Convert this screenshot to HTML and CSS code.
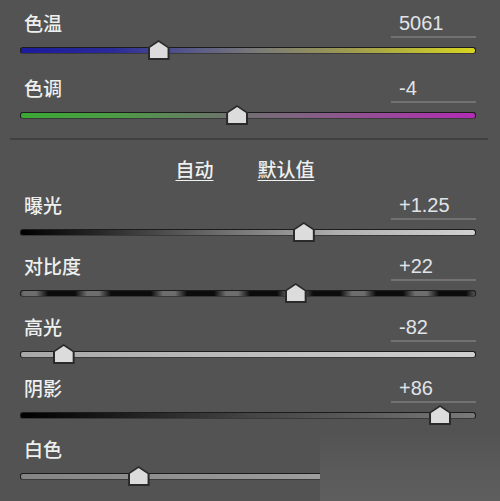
FILE: index.html
```html
<!DOCTYPE html>
<html lang="zh">
	<head>
		<meta charset="utf-8">
		<meta name="viewport" content="width=device-width, initial-scale=1.0">
		<title>基本调整</title>
		<link rel="stylesheet" href="styles.css">
	</head>
	<body>
		<div class="panel">
			<div class="row">
				<div class="head"><span class="label">色温</span><span class="value">5061</span></div>
				<div class="track temp"><span class="thumb" style="left: 30.3%"></span></div>
			</div>
			<div class="row">
				<div class="head"><span class="label">色调</span><span class="value">-4</span></div>
				<div class="track tint"><span class="thumb" style="left: 47.6%"></span></div>
			</div>

			<div class="sep"></div>

			<div class="links">
				<a href="#">自动</a>
				<a href="#">默认值</a>
			</div>

			<div class="row tight">
				<div class="head"><span class="label">曝光</span><span class="value">+1.25</span></div>
				<div class="track exposure"><span class="thumb" style="left: 62.3%"></span></div>
			</div>
			<div class="row tight">
				<div class="head"><span class="label">对比度</span><span class="value">+22</span></div>
				<div class="track contrast"><span class="thumb" style="left: 60.5%"></span></div>
			</div>
			<div class="row tight">
				<div class="head"><span class="label">高光</span><span class="value">-82</span></div>
				<div class="track highlights"><span class="thumb" style="left: 9.4%"></span></div>
			</div>
			<div class="row tight">
				<div class="head"><span class="label">阴影</span><span class="value">+86</span></div>
				<div class="track shadows"><span class="thumb" style="left: 92.3%"></span></div>
			</div>
			<div class="row tight">
				<div class="head"><span class="label">白色</span></div>
				<div class="track whites"><span class="thumb" style="left: 25.9%"></span></div>
			</div>
			<div class="row tight">
				<div class="head"><span class="label">黑色</span></div>
			</div>

			<div class="mark"></div>
		</div>
	</body>
</html>
```

FILE: styles.css
```css
	html, body {
		margin: 0;
		height: 100%;
		overflow: hidden;
		background: #535353;
	}

	body {
		font-family: "Liberation Sans", "Noto Sans CJK SC", sans-serif;
		color: #e4e6e8;
	}

	.panel {
		position: relative;
		padding: 8px 24px 0 20px;
		height: 100%;
		box-sizing: border-box;
	}

	.row {
		margin-bottom: 19px;
	}

	.row.tight {
		margin-bottom: 15px;
	}

	.head {
		display: flex;
		justify-content: space-between;
		align-items: center;
		height: 30px;
		padding-left: 4px;
	}

	.label {
		font-family: "Noto Sans CJK SC", sans-serif;
		font-size: 19px;
		font-weight: 500;
		line-height: 30px;
		color: #eef0f0;
	}

	.value {
		width: 85px;
		height: 30px;
		box-sizing: border-box;
		padding-left: 8px;
		font-size: 20px;
		line-height: 30px;
		border-bottom: 2px solid #727272;
		color: #e0e4e8;
	}

	.track {
		position: relative;
		margin-top: 9px;
		height: 7px;
		box-sizing: border-box;
		border: 1px solid #1c1c1c;
		border-bottom-color: #3a3a3a;
		border-radius: 3px;
	}

	.thumb {
		position: absolute;
		top: -8px;
		width: 22px;
		height: 20px;
		margin-left: -11px;
		background: #2a2a2a;
		clip-path: polygon(50% 0, 100% 38%, 100% 100%, 0 100%, 0 38%);
	}

	.thumb::after {
		content: "";
		position: absolute;
		left: 2px;
		top: 2px;
		right: 2px;
		bottom: 2px;
		background: #dcdcdc;
		clip-path: polygon(50% 0, 100% 38%, 100% 100%, 0 100%, 0 38%);
	}

	.temp {
		background: linear-gradient(to right, #1b1b9c, #2a2a98 20%, #5a5a88 38%, #7a7a78 52%, #9c9a50 72%, #d8d620);
	}

	.tint {
		background: linear-gradient(to right, #3aa834, #4c9c44 20%, #707070 48%, #8a5a8a 68%, #b22cb4);
	}

	.exposure {
		background: linear-gradient(to right, #000, #222 15%, #707070 45%, #b0b0b0 70%, #d2d2d2);
	}

	.contrast {
		background-color: #0c0c0c;
		background-image: repeating-linear-gradient(to right, transparent 0, transparent 22px, rgba(190, 190, 190, 0.55) 34px, rgba(190, 190, 190, 0.55) 46px, transparent 58px, transparent 63px);
		background-position: 108px 0;
	}

	.highlights {
		background: linear-gradient(to right, #a8a8a8, #bcbcbc 50%, #d0d0d0);
	}

	.shadows {
		background: linear-gradient(to right, #000, #1a1a1a 20%, #444 50%, #5c5c5c 75%, #7a7a7a);
	}

	.whites {
		background: linear-gradient(to right, #848484, #9a9a9a 60%, #b4b4b4);
	}

	.sep {
		height: 2px;
		background: #404040;
		margin: 7px -12px 15px -10px;
	}

	.links {
		display: flex;
		justify-content: center;
		gap: 44px;
		height: 28px;
		margin-bottom: 7px;
		padding-right: 6px;
	}

	.links a {
		font-family: "Noto Sans CJK SC", sans-serif;
		font-size: 19px;
		font-weight: 500;
		line-height: 28px;
		color: #eef0f0;
		text-decoration: underline;
		text-underline-offset: 3px;
		text-decoration-thickness: 1px;
	}

	.mark {
		position: absolute;
		left: 320px;
		top: 434px;
		right: 0;
		bottom: 0;
		background: linear-gradient(to bottom, rgba(92, 92, 92, 0), #5a5a5a 34px, #5e5e5e);
	}
```
